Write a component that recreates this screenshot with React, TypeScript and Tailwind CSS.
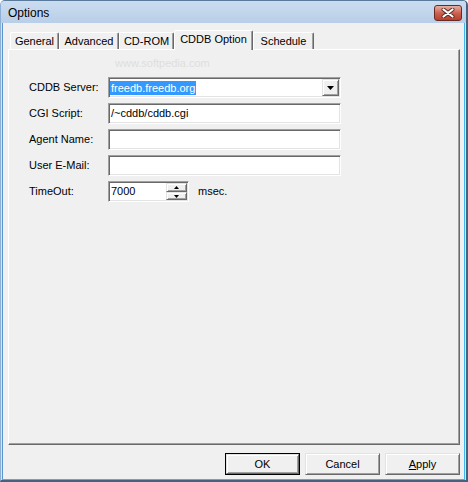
import React from "react";

const sunken =
  "border border-t-[#a0a0a0] border-l-[#a0a0a0] border-r-white border-b-white shadow-[inset_1px_1px_0_#696969,inset_-1px_-1px_0_#e3e3e3] p-[1px] bg-white";
const raised =
  "border border-t-[#e3e3e3] border-l-[#e3e3e3] border-r-[#696969] border-b-[#696969] shadow-[inset_1px_1px_0_#ffffff,inset_-1px_-1px_0_#a0a0a0] bg-[#f0f0f0]";

function Tab({ label, w, selected }: { label: string; w: string; selected?: boolean }) {
  if (selected) {
    return (
      <div
        className={`${w} h-[20px] -mb-[1px] relative bg-[#f0f0f0] border-t border-l border-r border-t-white border-l-white border-r-[#696969] shadow-[inset_-1px_0_0_#a0a0a0] rounded-t-[2px] flex items-center justify-center pb-[3px] text-[11px] leading-none`}
      >
        {label}
      </div>
    );
  }
  return (
    <div
      className={`${w} h-[17px] bg-[#f0f0f0] border-t border-l border-r border-t-white border-l-white border-r-[#696969] shadow-[inset_-1px_0_0_#a0a0a0] rounded-t-[2px] flex items-center justify-center text-[11px] leading-none`}
    >
      {label}
    </div>
  );
}

function Row({ label, children }: { label: string; children: React.ReactNode }) {
  return (
    <div className="flex items-center h-[21px]">
      <div className="w-[79px] text-[11px] leading-none">{label}</div>
      {children}
    </div>
  );
}

function Button({ children, def }: { children: React.ReactNode; def?: boolean }) {
  if (def) {
    return (
      <div className="w-[75px] h-[22px] border border-[#000] flex">
        <div className={`${raised} flex-1 flex items-center justify-center text-[11px] leading-none`}>{children}</div>
      </div>
    );
  }
  return (
    <div className={`${raised} w-[75px] h-[22px] flex items-center justify-center text-[11px] leading-none`}>
      {children}
    </div>
  );
}

export default function App() {
  return (
    <div className="w-[468px] h-[482px] flex flex-col font-['Liberation_Sans',Arial,sans-serif] text-black border-t border-l border-r-2 border-b-2 border-t-[#5a7a9c] border-l-[#8fb0d6] border-r-[#45627f] border-b-[#45627f] rounded-t-[5px] overflow-hidden bg-[#d6e5f4]">
      {/* Title bar */}
      <div className="h-[22px] shrink-0 flex items-start pl-[7px] pr-[4px] bg-linear-to-b from-[#cadcf0] to-[#b9cfe8]">
        <div className="text-[12px] leading-none pt-[6px]">Options</div>
        <div className="ml-auto mt-[4px] w-[28px] h-[16px] rounded-[3px] border border-[#6a2a24] bg-linear-to-b from-[#e6b0a6] via-[#cc6050] to-[#b8402c] flex items-center justify-center">
          <svg width="14" height="10" viewBox="0 0 14 10">
            <path d="M2.5 1.5 L11.5 8.5 M11.5 1.5 L2.5 8.5" stroke="#5a2a26" strokeWidth="4" strokeLinecap="round" />
            <path d="M2.5 1.5 L11.5 8.5 M11.5 1.5 L2.5 8.5" stroke="#ffffff" strokeWidth="2.2" strokeLinecap="round" />
          </svg>
        </div>
      </div>

      {/* Frame + client */}
      <div className="flex-1 flex px-[1px]">
        <div className="flex-1 relative flex flex-col bg-[#f0f0f0] border-l border-r border-b border-l-[#5b95d0] border-r-[#3cb6ec] border-b-[#3cb6ec] pl-[5px] pr-[4px] pt-[7px]">
          {/* Tabs */}
          <div className="h-[19px] flex items-end pl-[2px] relative z-10">
            <Tab label="General" w="w-[49px]" />
            <Tab label="Advanced" w="w-[60px]" />
            <Tab label="CD-ROM" w="w-[55px]" />
            <Tab label="CDDB Option" w="w-[79px]" selected />
            <Tab label="Schedule" w="w-[61px]" />
          </div>

          {/* Panel */}
          <div className="h-[396px] relative border border-t-white border-l-white border-r-[#696969] border-b-[#696969] shadow-[inset_-1px_-1px_0_#a0a0a0] pl-[20px] pt-[27px] flex flex-col gap-[5px]">
            <div className="absolute left-[106px] top-[8px] text-[11px] leading-none text-[#dedede] pointer-events-none">
              www.softpedia.com
            </div>

            <Row label="CDDB Server:">
              <div className={`${sunken} w-[233px] h-[21px] flex items-center`}>
                <div className="flex-1 flex items-center">
                  <span className="bg-[#3399ff] text-white text-[11px] leading-[14px] px-[1px]">freedb.freedb.org</span>
                </div>
                <div className={`${raised} w-[17px] h-[17px] flex items-center justify-center`}>
                  <svg width="7" height="4" viewBox="0 0 7 4">
                    <path d="M0 0 H7 L3.5 4 Z" fill="#000" />
                  </svg>
                </div>
              </div>
            </Row>

            <Row label="CGI Script:">
              <div className={`${sunken} w-[233px] h-[21px] flex items-center pl-[2px] text-[11px] leading-none`}>
                /~cddb/cddb.cgi
              </div>
            </Row>

            <Row label="Agent Name:">
              <div className={`${sunken} w-[233px] h-[21px]`} />
            </Row>

            <Row label="User E-Mail:">
              <div className={`${sunken} w-[233px] h-[21px]`} />
            </Row>

            <Row label="TimeOut:">
              <div className={`${sunken} w-[81px] h-[21px] flex`}>
                <div className="flex-1 flex items-center pl-[1px] text-[11px] leading-none">7000</div>
                <div className="w-[21px] flex flex-col">
                  <div className={`${raised} h-[9px] flex items-center justify-center`}>
                    <svg width="5" height="3" viewBox="0 0 5 3">
                      <path d="M2.5 0 L5 3 H0 Z" fill="#000" />
                    </svg>
                  </div>
                  <div className={`${raised} h-[8px] flex items-center justify-center`}>
                    <svg width="5" height="3" viewBox="0 0 5 3">
                      <path d="M0 0 H5 L2.5 3 Z" fill="#000" />
                    </svg>
                  </div>
                </div>
              </div>
              <div className="ml-[9px] text-[11px] leading-none">msec.</div>
            </Row>
          </div>

          {/* Buttons */}
          <div className="mt-[8px] h-[22px] flex justify-end gap-[5px]">
            <Button def>OK</Button>
            <Button>Cancel</Button>
            <Button>
              <span>
                <span className="underline">A</span>pply
              </span>
            </Button>
          </div>
        </div>
      </div>
    </div>
  );
}
